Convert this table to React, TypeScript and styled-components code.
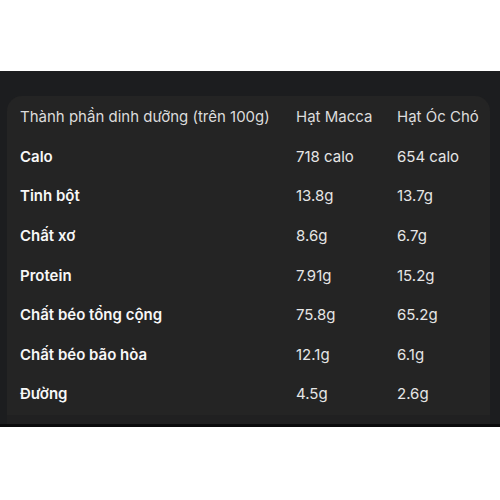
import React from 'react'
import styled, { createGlobalStyle } from 'styled-components'

const GlobalStyle = createGlobalStyle`
  html, body {
    margin: 0;
    padding: 0;
    background: #ffffff;
  }
  body {
    font-family: Inter, "Noto Sans", Roboto, sans-serif;
  }
`

interface NutrientRow {
  name: string
  macca: string
  walnut: string
}

const ROWS: NutrientRow[] = [
  { name: 'Calo', macca: '718 calo', walnut: '654 calo' },
  { name: 'Tinh bột', macca: '13.8g', walnut: '13.7g' },
  { name: 'Chất xơ', macca: '8.6g', walnut: '6.7g' },
  { name: 'Protein', macca: '7.91g', walnut: '15.2g' },
  { name: 'Chất béo tổng cộng', macca: '75.8g', walnut: '65.2g' },
  { name: 'Chất béo bão hòa', macca: '12.1g', walnut: '6.1g' },
  { name: 'Đường', macca: '4.5g', walnut: '2.6g' },
]

const Page = styled.div`
  padding-top: 71px;
`

const Panel = styled.section`
  background: #1c1d1f;
  padding: 25px 10px 0 7px;
  border-bottom: 3px solid #0b0b0c;
`

const Card = styled.div`
  background: #242424;
  border-radius: 15px 15px 0 0;
  padding: 1px 0 1px 13px;
  border-bottom: 9px solid #202021;
  margin-bottom: 0;
`

const Row = styled.div`
  display: grid;
  grid-template-columns: 276px 101px 1fr;
  align-items: center;
  height: 39.6px;
`

const Cell = styled.div<{ $bold?: boolean; $head?: boolean }>`
  font-size: 15px;
  font-weight: ${({ $bold }) => ($bold ? 600 : 400)};
  color: ${({ $bold, $head }) =>
    $bold ? '#f7f7f7' : $head ? '#dcdcdc' : '#e6e6e6'};
  white-space: nowrap;
`

export default function App() {
  return (
    <>
      <GlobalStyle />
      <Page>
        <Panel>
          <Card>
            <Row>
              <Cell $head>Thành phần dinh dưỡng (trên 100g)</Cell>
              <Cell $head>Hạt Macca</Cell>
              <Cell $head>Hạt Óc Chó</Cell>
            </Row>
            {ROWS.map((row) => (
              <Row key={row.name}>
                <Cell $bold>{row.name}</Cell>
                <Cell>{row.macca}</Cell>
                <Cell>{row.walnut}</Cell>
              </Row>
            ))}
          </Card>
        </Panel>
      </Page>
    </>
  )
}
